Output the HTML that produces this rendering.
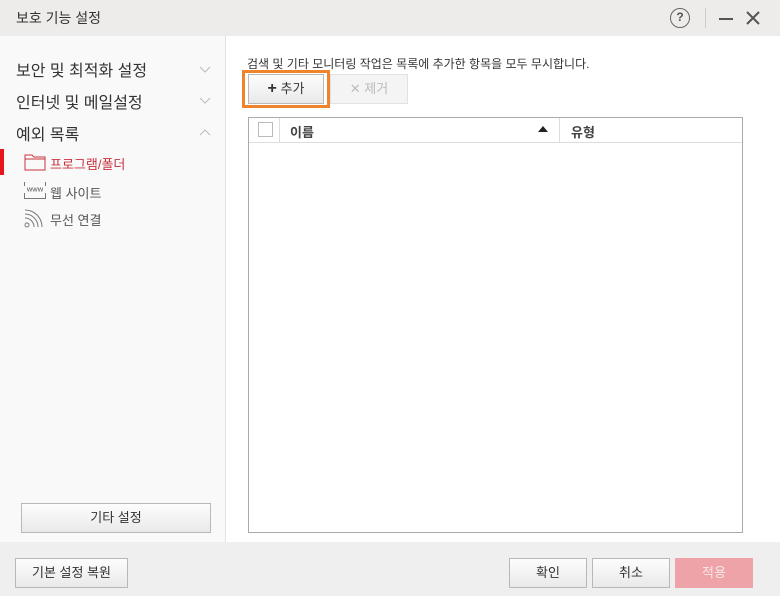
<!DOCTYPE html>
<html><head><meta charset="utf-8"><style>
*{margin:0;padding:0;box-sizing:border-box}
body{width:780px;height:596px;position:relative;overflow:hidden;background:#fff;font-family:"Liberation Sans","Noto Sans CJK KR","NanumGothic",sans-serif;color:#333}
.a{position:absolute}
.btn{position:absolute;border:1px solid #b8b8b8;background:linear-gradient(#fdfdfd,#e9e9e9);font-size:13px;text-align:center;color:#333}
</style></head><body>
<div class="a" style="left:0;top:0;width:780px;height:36px;background:#edecea"></div>
<div class="a" style="left:16px;top:8px;font-size:14px;color:#333">보호 기능 설정</div>
<div class="a" style="left:670px;top:8px;width:20px;height:20px;border:1.5px solid #666;border-radius:50%;font-size:12px;font-weight:bold;text-align:center;line-height:17px;color:#555">?</div>
<div class="a" style="left:705px;top:8px;width:1px;height:20px;background:#ccc"></div>
<div class="a" style="left:719px;top:18px;width:14px;height:2px;background:#555"></div>
<svg class="a" style="left:746px;top:11px" width="14" height="14"><path d="M1 1L13 13M13 1L1 13" stroke="#555" stroke-width="2"/></svg>
<div class="a" style="left:0;top:36px;width:226px;height:506px;background:#f9f9f9;border-right:1px solid #e2e2e2"></div>
<div class="a" style="left:16px;top:57px;font-size:16px">보안 및 최적화 설정</div>
<div class="a" style="left:16px;top:89px;font-size:16px">인터넷 및 메일설정</div>
<div class="a" style="left:16px;top:121px;font-size:16px">예외 목록</div>
<svg class="a" style="left:199px;top:66px" width="12" height="8"><path d="M1 1l5 5 5-5" stroke="#bbb" fill="none"/></svg>
<svg class="a" style="left:199px;top:97px" width="12" height="8"><path d="M1 1l5 5 5-5" stroke="#bbb" fill="none"/></svg>
<svg class="a" style="left:199px;top:129px" width="12" height="8"><path d="M1 6l5-5 5 5" stroke="#bbb" fill="none"/></svg>
<div class="a" style="left:0;top:149px;width:4px;height:26px;background:#e8141e"></div>
<svg class="a" style="left:24px;top:153px" width="22" height="18"><path d="M1 2h7l2 2h11v13H1z M1 6h20" stroke="#c9323e" fill="none"/></svg>
<div class="a" style="left:50px;top:154px;font-size:13px;color:#c9323e">프로그램/폴더</div>
<svg class="a" style="left:24px;top:181px" width="22" height="18"><path d="M0.5 1v4M21.5 1v4M0.5 12v5.5h21V12" stroke="#777" fill="none"/><text x="11" y="10.5" font-size="7.5" text-anchor="middle" fill="#555" font-family="Liberation Sans">www</text></svg>
<div class="a" style="left:50px;top:183px;font-size:13px;color:#555">웹 사이트</div>
<svg class="a" style="left:24px;top:208px" width="20" height="20"><circle cx="3" cy="17" r="2" fill="none" stroke="#777"/><path d="M1 10a9 9 0 0 1 9 9M1 6a13 13 0 0 1 13 13M1 2a17 17 0 0 1 17 17" stroke="#777" fill="none"/></svg>
<div class="a" style="left:50px;top:210px;font-size:13px;color:#555">무선 연결</div>
<div class="btn" style="left:21px;top:503px;width:190px;height:30px;line-height:28px">기타 설정</div>
<div class="a" style="left:247px;top:55px;font-size:12px;color:#333">검색 및 기타 모니터링 작업은 목록에 추가한 항목을 모두 무시합니다.</div>
<div class="a" style="left:242px;top:70px;width:88px;height:38px;border:3px solid #f0842c"></div>
<div class="btn" style="left:248px;top:74px;width:76px;height:30px;line-height:28px"><b style="font-size:16px">+</b> 추가</div>
<div class="a" style="left:330px;top:74px;width:78px;height:30px;border:1px solid #e2e2e2;background:#f4f4f4;font-size:13px;line-height:28px;text-align:center;color:#bbb">✕ 제거</div>
<div class="a" style="left:248px;top:117px;width:495px;height:416px;border:1px solid #aaa"></div>
<div class="a" style="left:249px;top:118px;width:493px;height:25px;border-bottom:1px solid #ddd"></div>
<div class="a" style="left:258px;top:122px;width:15px;height:15px;border:1px solid #bbb;background:#fff"></div>
<div class="a" style="left:279px;top:118px;width:1px;height:25px;background:#ddd"></div>
<div class="a" style="left:559px;top:118px;width:1px;height:25px;background:#ddd"></div>
<div class="a" style="left:290px;top:122px;font-size:13px;font-weight:bold;color:#444">이름</div>
<div class="a" style="left:538px;top:126px;width:0;height:0;border-left:5px solid transparent;border-right:5px solid transparent;border-bottom:6px solid #222"></div>
<div class="a" style="left:571px;top:122px;font-size:13px;font-weight:bold;color:#444">유형</div>
<div class="a" style="left:0;top:542px;width:780px;height:54px;background:#efefef"></div>
<div class="btn" style="left:15px;top:558px;width:113px;height:30px;line-height:28px">기본 설정 복원</div>
<div class="btn" style="left:509px;top:558px;width:78px;height:30px;line-height:28px">확인</div>
<div class="btn" style="left:592px;top:558px;width:78px;height:30px;line-height:28px">취소</div>
<div class="a" style="left:675px;top:558px;width:78px;height:30px;background:#eda3a7;color:#fbe6e6;font-size:13px;text-align:center;line-height:30px">적용</div>
</body></html>
